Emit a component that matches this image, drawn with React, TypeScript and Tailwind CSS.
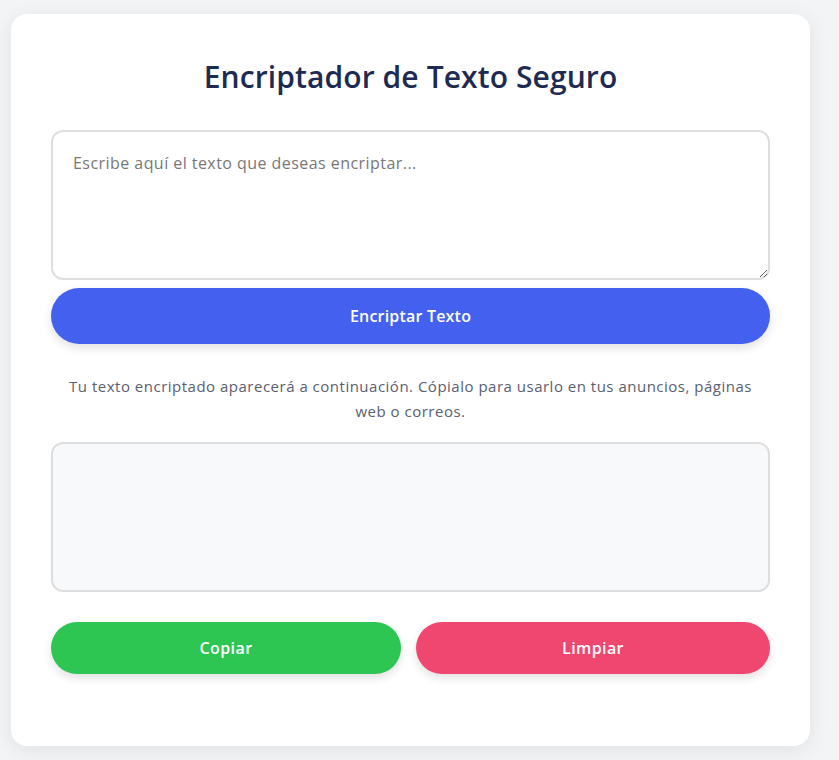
import { useState } from "react";

// ── Encriptador: single card with input, output and actions ──
export default function App() {
  const [text, setText] = useState("");
  const [result, setResult] = useState("");

  const font = { fontFamily: '"Open Sans", "Noto Sans", sans-serif' };

  return (
    <div className="min-h-screen bg-[#f3f4f6] pt-[14px] pl-[11px]" style={font}>
      <div className="w-[799px] rounded-2xl bg-white px-10 pt-[30px] pb-[72px] shadow-[0_4px_20px_rgba(0,0,0,0.08)]">
        {/* Title */}
        <h1 className="text-center text-[30px] leading-[66px] font-semibold tracking-[0.1px] text-[#1d2b53]">
          Encriptador de Texto Seguro
        </h1>

        {/* Input */}
        <textarea
          value={text}
          onChange={(e) => setText(e.target.value)}
          placeholder="Escribe aquí el texto que deseas encriptar..."
          className="mt-[20px] block h-[150px] w-full rounded-xl border-2 border-[#dedede] bg-white px-5 py-[19px] text-[16px] tracking-[0.45px] text-[#333] placeholder:text-[#777] outline-none"
        />

        {/* Encrypt button */}
        <button
          onClick={() => setResult(text.split("").reverse().join(""))}
          className="mt-2 block h-14 w-full rounded-full bg-[#4361ee] text-[16px] font-semibold tracking-[0.2px] text-white shadow-[0_4px_10px_rgba(0,0,0,0.12)]"
        >
          Encriptar Texto
        </button>

        {/* Help text */}
        <p className="mt-[30px] px-2 text-center text-[15px] leading-[25px] tracking-[0.5px] text-[#5a6070]">
          Tu texto encriptado aparecerá a continuación. Cópialo para usarlo en tus anuncios, páginas web o correos.
        </p>

        {/* Output */}
        <textarea
          readOnly
          value={result}
          className="mt-[18px] block h-[150px] w-full resize-none rounded-xl border-2 border-[#dedede] bg-[#f8f9fa] px-5 py-5 text-[16px] text-[#333] outline-none"
        />

        {/* Actions */}
        <div className="mt-[30px] flex gap-[15px]">
          <button
            onClick={() => navigator.clipboard?.writeText(result)}
            className="h-[52px] w-[350px] rounded-full bg-[#2dc653] text-[16px] font-semibold tracking-[0.4px] text-white shadow-[0_4px_10px_rgba(0,0,0,0.12)]"
          >
            Copiar
          </button>
          <button
            onClick={() => {
              setText("");
              setResult("");
            }}
            className="h-[52px] w-[354px] rounded-full bg-[#ef476f] text-[16px] font-semibold tracking-[0.4px] text-white shadow-[0_4px_10px_rgba(0,0,0,0.12)]"
          >
            Limpiar
          </button>
        </div>
      </div>
    </div>
  );
}
